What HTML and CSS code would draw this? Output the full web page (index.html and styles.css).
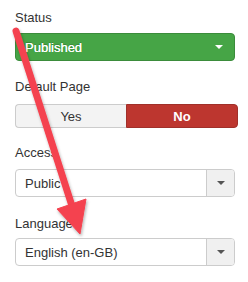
FILE: index.html
```html
<!DOCTYPE html>
<html lang="en">
<head>
  <meta charset="UTF-8">
  <title>Options</title>
  <link rel="stylesheet" href="styles.css">
</head>
<body>
  <div class="panel">
    <div class="field">
      <div class="field-label">Status</div>
      <div class="select select-status">
        <span class="select-value">Published</span>
        <span class="caret caret-white"></span>
      </div>
    </div>

    <div class="field field-toggle">
      <div class="field-label">Default Page</div>
      <div class="toggle">
        <div class="toggle-btn">Yes</div>
        <div class="toggle-btn active-no">No</div>
      </div>
    </div>

    <div class="field field-access">
      <div class="field-label">Access</div>
      <div class="select">
        <span class="select-value">Public</span>
        <span class="select-btn"><span class="caret"></span></span>
      </div>
    </div>

    <div class="field field-language">
      <div class="field-label">Language</div>
      <div class="select">
        <span class="select-value">English (en-GB)</span>
        <span class="select-btn"><span class="caret"></span></span>
      </div>
    </div>
  </div>

  <!-- annotation arrow drawn over the form -->
  <svg class="arrow" width="248" height="282" viewBox="0 0 248 282">
    <defs>
      <filter id="shadow" x="-20%" y="-20%" width="140%" height="140%">
        <feDropShadow dx="1" dy="2" stdDeviation="1.5" flood-color="#000" flood-opacity="0.3"/>
      </filter>
    </defs>
    <g filter="url(#shadow)" fill="#f4424f" stroke="#f4424f">
      <line x1="16" y1="31" x2="72" y2="206" stroke-width="7" stroke-linecap="round"/>
      <polygon points="57,209 86,199 80,234" stroke-width="1" stroke-linejoin="round"/>
    </g>
  </svg>
</body>
</html>
```

FILE: styles.css
```css
body {
  margin: 0;
  padding: 0;
  background-color: #fff;
  font-family: "Liberation Sans", Arial, sans-serif;
  font-size: 13px;
  color: #333;
}

.panel {
  padding: 9px 0 0 15px;
  width: 223px;
}

.field {
  margin-bottom: 17px;
}

.field-label {
  line-height: 18px;
  margin-bottom: 6px;
}

.field-toggle {
  margin-bottom: 16px;
}

.field-toggle .field-label {
  margin-bottom: 8px;
}

.field-access {
  margin-bottom: 18px;
}

.field-access .field-label {
  margin-bottom: 7px;
}

.field-language .field-label {
  margin-bottom: 5px;
}

.select {
  display: flex;
  align-items: center;
  width: 220px;
  height: 28px;
  box-sizing: border-box;
  border: 1px solid #ccc;
  border-radius: 4px;
  background-color: #fff;
}

.select-value {
  flex-grow: 1;
  padding-left: 9px;
  color: #333;
}

.select-btn {
  display: flex;
  justify-content: center;
  align-items: center;
  width: 27px;
  height: 100%;
  border-left: 1px solid #ccc;
  background-color: #f0f0f0;
  border-radius: 0 3px 3px 0;
}

.select-status {
  background-color: #46a546;
  border-color: #3b8c3b;
}

.select-status .select-value {
  color: #fff;
  text-shadow: 0 0 0.6px #fff, 0 -1px 0 rgba(0, 0, 0, 0.2);
}

.caret {
  width: 0;
  height: 0;
  border-left: 4px solid transparent;
  border-right: 4px solid transparent;
  border-top: 4px solid #555;
}

.caret-white {
  border-top-color: #fff;
  margin-right: 11px;
}

.toggle {
  display: flex;
  width: 223px;
  height: 24px;
}

.toggle-btn {
  flex: 1;
  display: flex;
  justify-content: center;
  align-items: center;
  box-sizing: border-box;
  border: 1px solid #ccc;
  background-color: #f3f3f3;
  color: #333;
}

.toggle-btn:first-child {
  border-radius: 4px 0 0 4px;
  border-right: none;
}

.active-no {
  background-color: #bd362f;
  border-color: #a0302a;
  color: #fff;
  font-weight: bold;
  border-radius: 0 4px 4px 0;
}

.arrow {
  position: absolute;
  top: 0;
  left: 0;
  pointer-events: none;
}
```
